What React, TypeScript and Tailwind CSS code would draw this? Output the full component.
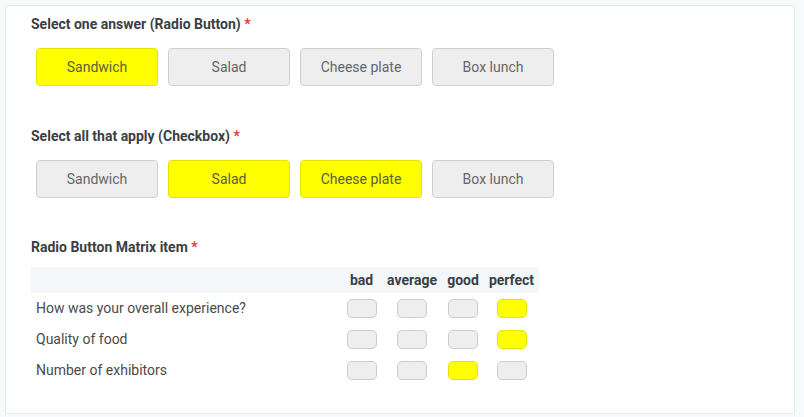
import React from "react";

const options = ["Sandwich", "Salad", "Cheese plate", "Box lunch"];

const matrixCols = [
	{ name: "bad", width: "w-[41px]" },
	{ name: "average", width: "w-[60px]" },
	{ name: "good", width: "w-[42px]" },
	{ name: "perfect", width: "w-[55px]" },
];
const matrixRows = [
	{ label: "How was your overall experience?", value: "perfect" },
	{ label: "Quality of food", value: "perfect" },
	{ label: "Number of exhibitors", value: "good" },
];

function Label({ children }: { children: React.ReactNode }) {
	return (
		<div className="h-5 text-[14px] leading-5 font-bold text-[#3a3f44]">
			{children} <span className="text-[#e53935]">*</span>
		</div>
	);
}

function ChoiceRow({ selected }: { selected: string[] }) {
	return (
		<div className="flex gap-[10px] pl-[5px]">
			{options.map((opt) => {
				const on = selected.includes(opt);
				return (
					<div
						key={opt}
						className={
							on
								? "flex h-[38px] w-[122px] items-center justify-center rounded-[4px] border border-[#e3e300] bg-[#ffff00] text-[14px] text-[#5e5e3a]"
								: "flex h-[38px] w-[122px] items-center justify-center rounded-[4px] border border-[#cfcfcf] bg-[#eeeeee] text-[14px] text-[#666666]"
						}
					>
						{opt}
					</div>
				);
			})}
		</div>
	);
}

function Cell({ on }: { on: boolean }) {
	return (
		<div
			className={
				on
					? "mx-auto h-[19px] w-[30px] rounded-[5px] border border-[#e3e300] bg-[#ffff00]"
					: "mx-auto h-[19px] w-[30px] rounded-[5px] border border-[#cccccc] bg-[#eeeeee]"
			}
		/>
	);
}

export default function App() {
	return (
		<div
			className="min-h-[417px] bg-[#f8fbfb] p-[5px]"
			style={{ fontFamily: "Roboto, 'Liberation Sans', sans-serif" }}
		>
			<div className="h-[409px] w-[790px] border border-[#e1ecec] bg-white pt-[8px] pl-[25px]">
				<Label>Select one answer (Radio Button)</Label>
				<div className="mt-[14px]">
					<ChoiceRow selected={["Sandwich"]} />
				</div>

				<div className="mt-[40px]">
					<Label>Select all that apply (Checkbox)</Label>
				</div>
				<div className="mt-[14px]">
					<ChoiceRow selected={["Salad", "Cheese plate"]} />
				</div>

				<div className="mt-[39px]">
					<Label>Radio Button Matrix item</Label>
				</div>
				<table className="mt-[10px] w-[508px] table-fixed border-collapse">
					<thead>
						<tr className="h-[26px] bg-[#f3f7fa]">
							<th className="w-[310px] p-0" />
							{matrixCols.map((c) => (
								<th
									key={c.name}
									className={`${c.width} p-0 text-center text-[14px] font-bold text-[#3a3f44]`}
								>
									{c.name}
								</th>
							))}
						</tr>
					</thead>
					<tbody>
						{matrixRows.map((r) => (
							<tr key={r.label} className="h-[31px]">
								<td className="py-0 pl-[5px] text-[14px] text-[#4a4a4a]">
									{r.label}
								</td>
								{matrixCols.map((c) => (
									<td key={c.name} className="p-0">
										<Cell on={r.value === c.name} />
									</td>
								))}
							</tr>
						))}
					</tbody>
				</table>
			</div>
		</div>
	);
}
